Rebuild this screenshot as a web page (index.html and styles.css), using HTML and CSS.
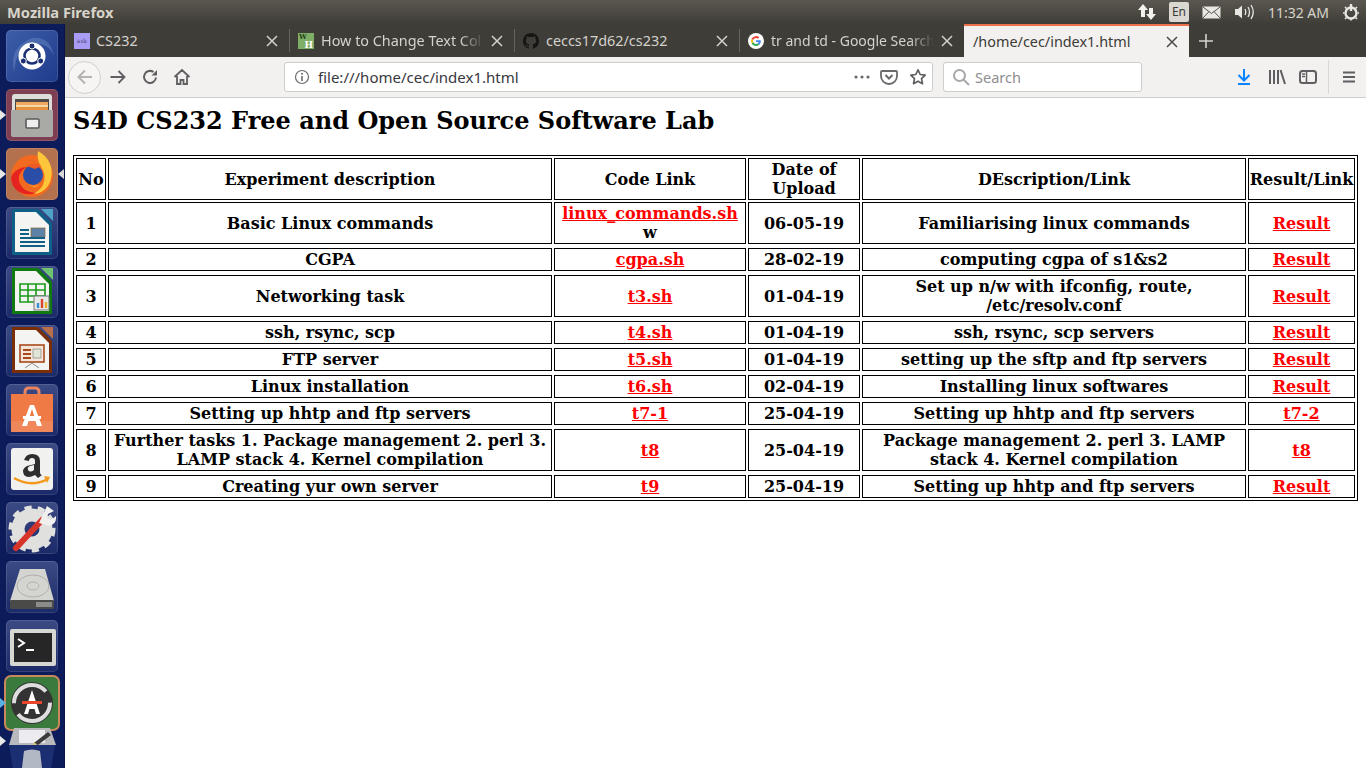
FILE: index.html
```html
<!DOCTYPE html>
<html lang="en">
<head>
<meta charset="utf-8">
<title>Mozilla Firefox</title>
<link rel="stylesheet" href="styles.css">
</head>
<body>
<header class="topbar">
  <span class="wintitle">Mozilla Firefox</span>
  <div class="indicators">
    <svg class="ind i-net" width="20" height="20" viewBox="0 0 20 20"><path d="M6 2 1 8h3v7h4V8h3zM14 18l5-6h-3V6h-4v6H9z" fill="#f2f1ee"/></svg>
    <span class="lang">En</span>
    <svg class="ind i-mail" width="19" height="13" viewBox="0 0 19 13"><rect x=".5" y=".5" width="18" height="12" rx="1" fill="#e8e7e3"/><path d="M1 1l8.500 6.500L18 1M1 12l6-6.500M18 12l-6-6.500" fill="none" stroke="#55524a"/></svg>
    <svg class="ind i-vol" width="21" height="16" viewBox="0 0 21 16"><path d="M1 5h3l4-3.500v13L4 11H1z" fill="#e8e7e3"/><path d="M11 5q1.500 3 0 6M14 3q3 5 0 10M17 1q4.500 7 0 14" fill="none" stroke="#e8e7e3" stroke-width="1.300"/></svg>
    <span class="clock">11:32 AM</span>
    <svg class="ind i-pow" width="18" height="18" viewBox="0 0 18 18"><path d="M9 1v7" stroke="#e8e7e3" stroke-width="2.400"/><circle cx="9" cy="10" r="5.500" fill="none" stroke="#e8e7e3" stroke-width="2.400"/><path d="M9 15.500v2M1 10h1.500M15.500 10H17M3 4l1.500 1.500M15 4l-1.500 1.500M3 16l1.500-1.500M15 16l-1.500-1.500" stroke="#e8e7e3" stroke-width="1.600"/></svg>
  </div>
</header>
<div class="desktop">
  <nav class="dock">
    <div class="tile t-ubuntu"><svg width="52" height="52" viewBox="0 0 52 52"><path d="M8 42Q2 18 26 8q18-2 22 18-6-14-22-12Q10 18 8 42z" fill="#6f8cc6" opacity=".45"/><circle cx="26" cy="26" r="13.500" fill="#fff"/><circle cx="26" cy="26" r="7.500" fill="none" stroke="#1c2f73" stroke-width="2.600"/><circle cx="26" cy="16" r="3" fill="#1c2f73" stroke="#fff"/><circle cx="17.300" cy="31" r="3" fill="#1c2f73" stroke="#fff"/><circle cx="34.700" cy="31" r="3" fill="#1c2f73" stroke="#fff"/></svg></div>
    <div class="tile t-files"><i class="pip pip-l"></i><svg width="52" height="52" viewBox="0 0 52 52"><path d="M6 8q0-3 3-3h34q3 0 3 3v38q0 2-2 2H8q-2 0-2-2z" fill="#dcdcd9"/><rect x="9" y="10" width="34" height="11" fill="#4e4a45"/><rect x="10" y="13" width="32" height="4" fill="#f0a860"/><rect x="10" y="16" width="32" height="3" fill="#f3d9a8"/><rect x="10" y="18" width="32" height="3" fill="#e5913f"/><path d="M5 21h42v25q0 2-2 2H7q-2 0-2-2z" fill="#a9a9a6"/><rect x="20" y="30" width="13" height="9" rx="1" fill="#eee" stroke="#5a5a5a" stroke-width="1.600"/></svg></div>
    <div class="tile t-firefox"><i class="pip pip-l"></i><i class="pip pip-r"></i><svg width="52" height="52" viewBox="0 0 52 52"><circle cx="26" cy="28" r="21" fill="#f26a1f"/><path d="M32 3c11 6 16 17 13 28-2 9-10 15-18 15 9-4 13-12 11-21-2-7-8-11-6-22z" fill="#fcc53a"/><circle cx="27" cy="27" r="10" fill="#2a4ea8"/><path d="M20 18q8-5 15 0l-6 3q-5-2-9-3z" fill="#ef5a24"/><path d="M5 30c1 14 14 19 25 15-9-1-15-4-17-12-1-6 2-11 8-14-7 0-14 4-16 11z" fill="#e6241f"/><path d="M22 36q6 4 12 0-5 6-12 0z" fill="#ffb02e"/></svg></div>
    <div class="tile t-writer"><svg width="52" height="52" viewBox="0 0 52 52"><path d="M6 2h26l14 14v32H6z" fill="#0f5f86"/><path d="M9 5h21l13 13v27H9z" fill="#f4f4f2"/><path d="M35 2h12v12z" fill="#4ea3c7"/><rect x="25" y="21" width="14" height="9" fill="#5d84a8" stroke="#8a6a3a" stroke-width=".7"/><path d="M14 23h9M14 27h9M14 31h25M14 35h25M14 39h25" stroke="#0f5f86" stroke-width="2"/></svg></div>
    <div class="tile t-calc"><svg width="52" height="52" viewBox="0 0 52 52"><path d="M6 2h26l14 14v32H6z" fill="#107a10"/><path d="M9 5h21l13 13v27H9z" fill="#f4f4f2"/><path d="M35 2h12v12z" fill="#6fc46f"/><path d="M14 18h25v18H14zM14 24h25M14 30h25M22 18v18M30 18v18" fill="none" stroke="#1a9a1a" stroke-width="1.600"/><rect x="28" y="30" width="15" height="14" fill="#e8e8e8" stroke="#777"/><path d="M32 42v-5" stroke="#3a8fd0" stroke-width="2.400"/><path d="M36 42v-9" stroke="#d8452a" stroke-width="2.400"/><path d="M40 42v-6" stroke="#e8b02c" stroke-width="2.400"/></svg></div>
    <div class="tile t-impress"><svg width="52" height="52" viewBox="0 0 52 52"><path d="M6 2h26l14 14v32H6z" fill="#7a2e08"/><path d="M9 5h21l13 13v27H9z" fill="#f4f4f2"/><path d="M35 2h12v12z" fill="#b9704a"/><rect x="14" y="20" width="24" height="17" fill="#f6e6da" stroke="#a84a1c" stroke-width="1.600"/><path d="M17 25h8M17 29h8M17 33h8" stroke="#a84a1c" stroke-width="2"/><rect x="27" y="24" width="8" height="9" fill="#dfe6d8" stroke="#777" stroke-width=".6"/><path d="M26 38l-7 5M26 38l7 5" stroke="#888"/></svg></div>
    <div class="tile t-store"><svg width="52" height="52" viewBox="0 0 52 52"><path d="M19 12V8q0-4 4-4h6q4 0 4 4v4" fill="none" stroke="#e88560" stroke-width="3"/><path d="M5 10h42v38H5z" fill="#ef7a45"/><path d="M5 37h42v11H5z" fill="#f0875a"/><path d="M24 21h4l8 21h-5l-1.500-5h-7L21 42h-5z" fill="#fff"/><path d="M26 25l-2.200 7h4.400z" fill="#ef7a45"/><rect x="17" y="32" width="18" height="3" fill="#fff"/></svg></div>
    <div class="tile t-amazon"><svg width="52" height="52" viewBox="0 0 52 52"><rect x="5" y="5" width="42" height="42" rx="3" fill="#f1f1ef"/><path d="M18 17q2-6 8-6 8 0 8 7v11q0 3 2 3l-4 3-3-3q-7 4-11 0-3-6 3-9l8-2v-3q0-3-3-3t-3 3zM28 22l-4 1q-3 1-2 4 2 3 6 0z" fill="#2e2e2e" fill-rule="evenodd"/><path d="M8 35q17 10 34 1" fill="none" stroke="#f39a1d" stroke-width="2.400"/><path d="M38 33l6 1-3 6" fill="#f39a1d"/></svg></div>
    <div class="tile t-tools"><svg width="52" height="52" viewBox="0 0 52 52"><circle cx="26" cy="27" r="14" fill="none" stroke="#e0e0de" stroke-width="13"/><circle cx="26" cy="27" r="21" fill="none" stroke="#e0e0de" stroke-width="5" stroke-dasharray="7 6"/><path d="M10 46 36 18" stroke="#d8352a" stroke-width="6" stroke-linecap="round"/><path d="M33 21 41 4l7 5-6 3-1 4 4 2 5-4q1 8-7 10z" fill="#f0f0ee"/></svg></div>
    <div class="tile t-disk"><svg width="52" height="52" viewBox="0 0 52 52"><path d="M14 8h25l9 32H4z" fill="#d4d4d0"/><rect x="4" y="39" width="44" height="9" rx="1" fill="#4a4a48"/><rect x="30" y="41" width="16" height="5" fill="#8c8c8a"/><ellipse cx="27" cy="25" rx="16" ry="11" fill="none" stroke="#b0b0ac"/><ellipse cx="27" cy="25" rx="6" ry="4" fill="none" stroke="#b0b0ac"/></svg></div>
    <div class="tile t-term"><svg width="52" height="52" viewBox="0 0 52 52"><rect x="4" y="9" width="46" height="37" rx="2" fill="#d6d6d2"/><rect x="8" y="13" width="38" height="29" fill="#262626"/><path d="M12 19l6 4-6 4" fill="none" stroke="#fff" stroke-width="2"/><path d="M20 30h8" stroke="#fff" stroke-width="2"/></svg></div>
    <div class="tile t-update"><i class="pip pip-a"></i><svg width="52" height="52" viewBox="0 0 52 52"><circle cx="26" cy="26" r="21" fill="#333"/><circle cx="26" cy="26" r="18" fill="none" stroke="#ddd" stroke-width="4" stroke-dasharray="44 12"/><path d="M26 13l-8 24h4l1.500-5h5l1.500 5h4z" fill="#fff"/><rect x="16" y="24" width="20" height="3" fill="#e8452a"/></svg></div>
    <div class="tile t-last"><i class="pip pip-l"></i><svg width="52" height="41" viewBox="0 0 52 41"><path d="M3 18l3-1h40l3 1-4 24H7z" fill="#1c2e72"/><path d="M8 1h36l6 17H3z" fill="#b9b9bd"/><rect x="13" y="3" width="26" height="13" fill="#ecebef"/><path d="M28 16 42 5l3 3-13 10z" fill="#3a3a3a"/><path d="M28 16l3 1-4 1z" fill="#f0d040"/><path d="M18 24q8-3 16 0l2 17H16z" fill="#d9dbd9" opacity=".8"/></svg></div>
  </nav>
  <main class="browser">
    <div class="tabstrip">
      <div class="tab tab-first"><span class="fav fav-ask">ask</span><span class="tab-label">CS232</span><svg class="tab-x" width="12" height="12" viewBox="0 0 12 12"><path d="M1 1l10 10M11 1 1 11" stroke="currentColor" stroke-width="1.500"/></svg></div>
      <div class="tab"><span class="fav fav-wh"><b>W</b><b class="wh-h">H</b></span><span class="tab-label fade">How to Change Text Col</span><svg class="tab-x" width="12" height="12" viewBox="0 0 12 12"><path d="M1 1l10 10M11 1 1 11" stroke="currentColor" stroke-width="1.500"/></svg></div>
      <div class="tab"><svg class="fav" width="16" height="16" viewBox="0 0 16 16"><path fill="#161514" d="M8 0C3.580 0 0 3.580 0 8c0 3.540 2.290 6.530 5.470 7.590.4.070.55-.17.55-.38v-1.340c-2.230.48-2.700-1.070-2.700-1.070-.36-.92-.89-1.170-.89-1.170-.73-.5.050-.49.050-.49.8.060 1.230.83 1.230.83.710 1.220 1.870.87 2.330.66.070-.52.280-.87.510-1.070-1.780-.2-3.640-.89-3.640-3.950 0-.87.310-1.590.820-2.150-.08-.2-.36-1.020.080-2.120 0 0 .67-.21 2.200.82a7.600 7.600 0 0 1 4 0c1.530-1.040 2.200-.82 2.200-.82.440 1.100.160 1.920.080 2.120.51.560.82 1.270.82 2.150 0 3.070-1.870 3.750-3.650 3.950.290.250.540.730.540 1.480v2.200c0 .210.150.460.550.380A8 8 0 0 0 16 8c0-4.420-3.580-8-8-8z"/></svg><span class="tab-label">ceccs17d62/cs232</span><svg class="tab-x" width="12" height="12" viewBox="0 0 12 12"><path d="M1 1l10 10M11 1 1 11" stroke="currentColor" stroke-width="1.500"/></svg></div>
      <div class="tab tab-narrow"><svg class="fav" width="16" height="16" viewBox="0 0 16 16"><circle cx="8" cy="8" r="8" fill="#fff"/><path d="M12.800 8.200c0-.4 0-.7-.1-1H8v1.900h2.700c-.1.600-.5 1.200-1 1.500l1.500 1.200c.9-.8 1.600-2.100 1.600-3.600z" fill="#4285f4"/><path d="M8 13c1.300 0 2.400-.4 3.200-1.200l-1.500-1.200c-.4.300-1 .5-1.700.5-1.300 0-2.400-.9-2.800-2L3.600 10.200C4.400 11.900 6.100 13 8 13z" fill="#34a853"/><path d="M5.200 9.100a3 3 0 0 1 0-2L3.600 5.800a5 5 0 0 0 0 4.400z" fill="#fbbc05"/><path d="M8 5c.7 0 1.400.3 1.900.7l1.400-1.400A5 5 0 0 0 3.600 5.800l1.600 1.300C5.600 5.900 6.700 5 8 5z" fill="#ea4335"/></svg><span class="tab-label fade">tr and td - Google Search</span><svg class="tab-x" width="12" height="12" viewBox="0 0 12 12"><path d="M1 1l10 10M11 1 1 11" stroke="currentColor" stroke-width="1.500"/></svg></div>
      <div class="tab tab-active"><span class="tab-label">/home/cec/index1.html</span><svg class="tab-x" width="12" height="12" viewBox="0 0 12 12"><path d="M1 1l10 10M11 1 1 11" stroke="currentColor" stroke-width="1.500"/></svg></div>
      <svg class="newtab" width="14" height="14" viewBox="0 0 14 14"><path d="M7 0v14M0 7h14" stroke="#d4d2cd" stroke-width="1.600"/></svg>
    </div>
    <div class="toolbar">
      <span class="backbtn"><svg width="20" height="20" viewBox="0 0 20 20"><path d="M17 10H4M10 3.500 3.500 10l6.500 6.500" fill="none" stroke="#b4b4b4" stroke-width="2"/></svg></span>
      <svg class="tool fwd" width="18" height="18" viewBox="0 0 18 18"><path d="M1.500 9h14M9.500 3l6 6-6 6" fill="none" stroke="#5f5f61" stroke-width="1.800"/></svg>
      <svg class="tool reload" width="18" height="18" viewBox="0 0 18 18"><path d="M15 9.500A6 6 0 1 1 12.500 4" fill="none" stroke="#5f5f61" stroke-width="2"/><path d="M10.500 7.500H16V2z" fill="#5f5f61"/></svg>
      <svg class="tool home" width="18" height="18" viewBox="0 0 18 18"><path d="M1.500 9 9 2l7.500 7M4 8v8h3.500v-4h3v4H14V8" fill="none" stroke="#5f5f61" stroke-width="1.800"/></svg>
      <div class="urlbar">
        <svg width="16" height="16" viewBox="0 0 16 16"><circle cx="8" cy="8" r="6.500" fill="none" stroke="#6a6a6c" stroke-width="1.200"/><path d="M8 7v5" stroke="#6a6a6c" stroke-width="1.600"/><circle cx="8" cy="4.800" r="1" fill="#6a6a6c"/></svg>
        <span class="url">file:///home/cec/index1.html</span>
        <svg class="dots" width="16" height="4" viewBox="0 0 16 4"><circle cx="2" cy="2" r="1.600" fill="#6a6a6c"/><circle cx="8" cy="2" r="1.600" fill="#6a6a6c"/><circle cx="14" cy="2" r="1.600" fill="#6a6a6c"/></svg>
        <svg class="pocket" width="18" height="18" viewBox="0 0 18 18"><path d="M2 3h14q1 0 1 1v4a8 8 0 0 1-16 0V4q0-1 1-1z" fill="none" stroke="#6a6a6c" stroke-width="1.800"/><path d="M5.500 7 9 10.500 12.500 7" fill="none" stroke="#6a6a6c" stroke-width="2"/></svg>
        <svg width="18" height="18" viewBox="0 0 18 18"><path d="M9 1.800l2.200 4.700 5 .6-3.700 3.500 1 5.100L9 13.200l-4.500 2.500 1-5.100L1.800 7.100l5-.6z" fill="none" stroke="#5f5f61" stroke-width="1.700" stroke-linejoin="round"/></svg>
      </div>
      <div class="searchbar">
        <svg width="18" height="18" viewBox="0 0 18 18"><circle cx="7.500" cy="7.500" r="5.500" fill="none" stroke="#a8a8a8" stroke-width="2"/><path d="M11.500 11.500 17 17" stroke="#a8a8a8" stroke-width="2"/></svg>
        <span>Search</span>
      </div>
      <svg class="tool dl" width="18" height="18" viewBox="0 0 18 18"><path d="M9 1v11M3.500 7 9 12.500 14.500 7" fill="none" stroke="#0a84ff" stroke-width="2"/><path d="M3 16h12" stroke="#0a84ff" stroke-width="2"/></svg>
      <svg class="tool lib" width="18" height="18" viewBox="0 0 18 18"><path d="M2 2v14M6 2v14M10 2v14M12.500 2 17 16" fill="none" stroke="#5f5f61" stroke-width="2"/></svg>
      <svg class="tool side" width="18" height="16" viewBox="0 0 18 16"><rect x="1" y="2" width="16" height="12" rx="2.500" fill="none" stroke="#5f5f61" stroke-width="2"/><path d="M7.500 2v12M3 5h3M3 7.500h3" stroke="#5f5f61" stroke-width="1.500"/></svg>
      <span class="tooldiv"></span>
      <svg class="tool menu" width="14" height="12" viewBox="0 0 14 12"><path d="M1 1.500h12M1 6h12M1 10.500h12" stroke="#5f5f61" stroke-width="1.800"/></svg>
    </div>
    <div class="page">
      <h1>S4D CS232 Free and Open Source Software Lab</h1>
      <table class="lab">
        <tr><th>No</th><th>Experiment description</th><th>Code Link</th><th>Date of Upload</th><th>DEscription/Link</th><th>Result/Link</th></tr>
        <tr><th>1</th><th>Basic Linux commands</th><th><span><a href="#">linux_commands.sh</a> w</span></th><th>06-05-19</th><th>Familiarising linux commands</th><th><a href="#">Result</a></th></tr>
        <tr><th>2</th><th>CGPA</th><th><a href="#">cgpa.sh</a></th><th>28-02-19</th><th>computing cgpa of s1&amp;s2</th><th><a href="#">Result</a></th></tr>
        <tr><th>3</th><th>Networking task</th><th><a href="#">t3.sh</a></th><th>01-04-19</th><th>Set up n/w with ifconfig, route, /etc/resolv.conf</th><th><a href="#">Result</a></th></tr>
        <tr><th>4</th><th>ssh, rsync, scp</th><th><a href="#">t4.sh</a></th><th>01-04-19</th><th>ssh, rsync, scp servers</th><th><a href="#">Result</a></th></tr>
        <tr><th>5</th><th>FTP server</th><th><a href="#">t5.sh</a></th><th>01-04-19</th><th>setting up the sftp and ftp servers</th><th><a href="#">Result</a></th></tr>
        <tr><th>6</th><th>Linux installation</th><th><a href="#">t6.sh</a></th><th>02-04-19</th><th>Installing linux softwares</th><th><a href="#">Result</a></th></tr>
        <tr><th>7</th><th>Setting up hhtp and ftp servers</th><th><a href="#">t7-1</a></th><th>25-04-19</th><th>Setting up hhtp and ftp servers</th><th><a href="#">t7-2</a></th></tr>
        <tr><th>8</th><th>Further tasks 1. Package management 2. perl 3. LAMP stack 4. Kernel compilation</th><th><a href="#">t8</a></th><th>25-04-19</th><th>Package management 2. perl 3. LAMP stack 4. Kernel compilation</th><th><a href="#">t8</a></th></tr>
        <tr><th>9</th><th>Creating yur own server</th><th><a href="#">t9</a></th><th>25-04-19</th><th>Setting up hhtp and ftp servers</th><th><a href="#">Result</a></th></tr>
      </table>
    </div>
  </main>
</div>
</body>
</html>
```
FILE: styles.css
```css
* { box-sizing: border-box; }
html, body { margin: 0; height: 100%; overflow: hidden; }
body { width: 1366px; height: 768px; font-family: "Noto Sans", "Open Sans", sans-serif; background: #fff; display: flex; flex-direction: column; }

.topbar { height: 24px; flex: none; display: flex; align-items: center; justify-content: space-between; background: linear-gradient(#5a5750, #3f3d37); padding: 0 6px 0 7px; }
.wintitle { font: bold 14.700px "Noto Sans", sans-serif; color: #d8d4ca; }
.indicators { display: flex; align-items: center; }
.ind { display: block; flex: none; }
.lang { width: 20px; height: 20px; margin-left: 12px; background: #dbd8d1; border-radius: 2px; color: #3c3b37; font-size: 12px; line-height: 20px; text-align: center; }
.i-mail { margin-left: 13px; }
.i-vol { margin-left: 13px; }
.clock { font-size: 14px; color: #d8d4ca; margin: 0 13px 0 13px; }

.desktop { flex: 1; display: flex; min-height: 0; }
.dock { width: 65px; flex: none; background: #0c1b5a; display: flex; flex-direction: column; align-items: flex-start; gap: 7px; padding: 6px 0 0 6px; border-right: 1px solid #0a1448; overflow: hidden; }
.tile { width: 52px; height: 52px; flex: none; border-radius: 5px; position: relative; background: linear-gradient(#3c4a84, #1b2a68); box-shadow: inset 0 0 0 1px rgba(255,255,255,.12); }
.tile svg { display: block; }
.t-ubuntu { background: linear-gradient(135deg, #3c5fa8, #1f3a8c); }
.t-files { background: #7f3f52; }
.t-firefox { background: #b3714e; }
.t-update { background: #3a7a3c; box-shadow: 0 0 0 2px #c88a5a; margin-top: -2px; }
.t-last { background: none; box-shadow: none; height: 41px; margin-top: -9px; z-index: 1; }
.pip { position: absolute; top: 21px; width: 0; height: 0; border-style: solid; border-color: transparent; border-width: 5px 0 5px 6px; }
.t-last .pip { top: 9px; }
.pip-l { left: -6px; border-left-color: #e8e8e8; }
.pip-r { right: -6px; border-width: 5px 6px 5px 0; border-right-color: #d8d8d8; }
.pip-a { left: -6px; border-left-color: #5ab0e0; }

.browser { flex: 1; min-width: 0; display: flex; flex-direction: column; }
.tabstrip { height: 33px; flex: none; display: flex; align-items: stretch; background: #3f3d38; }
.tab { width: 225px; flex: none; display: flex; align-items: center; padding: 0 11px 0 9px; gap: 7px; color: #d4d2cd; font-size: 14.400px; position: relative; }
.tab-first { width: 224px; gap: 6px; }
.tab-narrow { font-size: 14px; }
.tab + .tab::before { content: ""; position: absolute; left: 0; top: 5px; bottom: 5px; width: 1px; background: #66645e; }
.tab-label { flex: 1; white-space: nowrap; overflow: hidden; min-width: 0; }
.fade { -webkit-mask-image: linear-gradient(90deg, #000 85%, transparent); mask-image: linear-gradient(90deg, #000 85%, transparent); }
.tab-x { color: #d4d2cd; flex: none; display: block; }
.fav { width: 16px; height: 16px; flex: none; display: block; }
.fav-ask { background: #a99cf5; color: #55477c; font: 6px/16px "DejaVu Serif", serif; text-align: center; }
.fav-wh { background: #7fae66; color: #25401a; font: bold 7px/8px "DejaVu Serif", serif; padding-left: 1px; }
.fav-wh b { display: block; }
.fav-wh .wh-h { color: #fff; font-size: 9px; text-align: right; padding-right: 1px; }
.tab-active { background: #f2f1ef; color: #3c3b37; border-top: 2px solid #e9724a; }
.tab-active::before { display: none; }
.tab-active .tab-x { color: #4a4a4a; }
.newtab { align-self: center; margin-left: 10px; display: block; }

.toolbar { height: 41px; flex: none; display: flex; align-items: center; background: #f2f1ef; border-bottom: 1px solid #cfcfcd; padding: 0 0 0 3px; }
.tool { display: block; flex: none; }
.backbtn { width: 33px; height: 33px; border-radius: 50%; border: 1px solid #cfcfcd; background: #f6f5f3; display: flex; align-items: center; justify-content: center; flex: none; }
.fwd { margin-left: 8px; }
.reload { margin-left: 14px; }
.home { margin-left: 14px; }
.urlbar { width: 649px; height: 30px; margin-left: 93px; flex: none; background: #fff; border: 1px solid #cdcdcb; border-radius: 3px; display: flex; align-items: center; gap: 8px; padding: 0 5px 0 9px; }
.url { flex: 1; font-size: 15px; color: #38383d; }
.dots { display: block; margin-right: 2px; }
.pocket { margin-right: 3px; }
.searchbar { width: 199px; height: 30px; margin-left: 10px; flex: none; background: #fff; border: 1px solid #cdcdcb; border-radius: 3px; display: flex; align-items: center; gap: 5px; padding: 0 8px; color: #8e8e8e; font-size: 14.500px; }
.dl { margin-left: 93px; }
.lib { margin-left: 15px; }
.side { margin-left: 13px; }
.tooldiv { width: 1px; height: 34px; background: #d8d8d6; margin-left: 11px; flex: none; }
.menu { margin-left: 13px; }

.page { flex: 1; background: #fff; padding: 0 8px; color: #000; font-family: "DejaVu Serif", serif; overflow: hidden; }
h1 { font: bold 24px/28px "DejaVu Serif", serif; margin: 9px 0 20px; white-space: nowrap; }
.lab { display: grid; grid-template-columns: 30px 444px 192px 112px 384px 107px; gap: 2px; padding: 2px; border: 1px solid #000; width: 1285px; }
.lab tbody, .lab tr { display: contents; }
.lab th { display: flex; align-items: center; justify-content: center; min-width: 0; border: 1px solid #000; padding: 1px; font: bold 16px/19px "DejaVu Serif", serif; text-align: center; }
.lab tr + tr th { margin-bottom: 2px; }
.lab tr:last-child th { margin-bottom: 0; }
.lab a { color: #f00; text-decoration: underline; }
```
